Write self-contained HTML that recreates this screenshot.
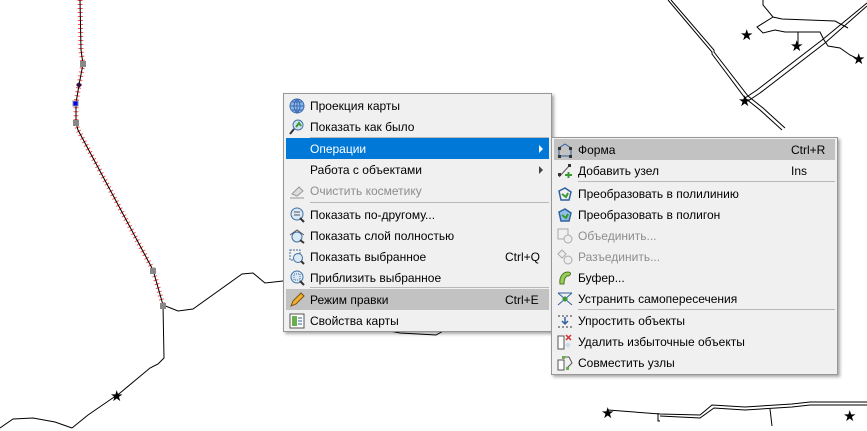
<!DOCTYPE html>
<html><head><meta charset="utf-8"><style>
body{margin:0;width:867px;height:431px;overflow:hidden;background:#fff;position:relative;font-family:"Liberation Sans",sans-serif;font-size:12px;color:#000}
.m{position:absolute;background:#f0f0f0;border:1px solid #979797;box-shadow:2px 2px 3px rgba(0,0,0,.35)}
.i{position:absolute;left:2px;right:2px;height:21px;line-height:23px;white-space:nowrap}
.i .t{position:absolute;left:24px}
.i .k{position:absolute}
.i svg{position:absolute;left:3px;top:3px}
.hl{background:#0078d7;color:#fff}
.gr{background:#c2c2c2}
.dis{color:#8d8d8d}
.s{position:absolute;left:26px;right:2px;height:1px;background:#b8b8b8}
.ar{position:absolute;right:6px;top:7px;width:0;height:0;border-left:4px solid #444;border-top:4px solid transparent;border-bottom:4px solid transparent}
</style></head><body>
<svg width="867" height="431" style="position:absolute;left:0;top:0">
<g fill="none" stroke="#000" stroke-width="1">
<path d="M80 0 L81 50 L83 64 L79 85 L76 103 L76 123 L78 130 L153 270 L163 305" stroke="#ff5050" stroke-width="5" stroke-dasharray="1 3"/>
<path d="M80 0 L81 50 L83 64 L79 85 L76 103 L76 123 L78 130 L153 270 L163 305"/>
<path d="M163 305 L164 358 L158 364 L150 368 L120 393 L88 415 L72 428"/>
<path d="M0 428 L13 419 L33 418 L55 422 L72 428"/>
<path d="M163 305 L178 311 L193 309 L242 274 L253 273 L265 283 L283 281"/>
<path d="M385 330 L400 333 L436 335 L445 330"/>
<path d="M668 0 L712 52 L712 54 L745 98 L760 110 L782 130"/>
<path d="M671 0 L714 50 L714 52 L748 96 L763 108 L785 128"/>
<path d="M745 98 L757 90 L822 40 L867 3"/>
<path d="M748 101 L760 93 L825 43 L867 6"/>
<path d="M763 0 L763 5 L773 17 L782 19 L835 21 L848 28"/>
<path d="M773 17 L757 27 L763 33 L775 30 L785 32 L798 32 L798 44 M798 32 L820 32 L824 40 L828 46 L840 48 L850 55 L858 59"/>
<path d="M608 410 L660 414 L700 415 L712 405 L745 407 L792 404 L810 402 L867 402"/>
<path d="M660 416 L700 418 L714 408 L745 410 L792 407 L810 405 L867 405"/>
<path d="M658 413 L658 421 L660 421 M770 409 L772 426"/>
</g>
<g fill="#888"><rect x="80" y="61" width="6" height="6"/><rect x="73" y="120" width="6" height="6"/><rect x="150" y="268" width="6" height="6"/><rect x="160" y="303" width="6" height="6"/></g>
<rect x="73" y="101" width="5" height="5" fill="#0000ff" stroke="#888"/>
<path d="M79 82 L82 85 L79 88 L76 85Z" fill="#301040"/>
<g font-size="15" font-family="DejaVu Sans" fill="#000">
<text x="110" y="401">★</text><text x="740" y="40">★</text><text x="790" y="51">★</text><text x="738" y="106">★</text><text x="852" y="64">★</text><text x="601" y="418">★</text><text x="843" y="421">★</text>
</g>
</svg>

<div class="m" style="left:283px;top:93px;width:267px;height:237px">
<div class="i" style="top:1px"><svg width="16" height="16"><circle cx="8" cy="8" r="7" fill="#8fb6e6" stroke="#3a6ab0"/><path d="M1 8H15M8 1V15M3 4H13M3 12H13M8 1C4 5 4 11 8 15C12 11 12 5 8 1" stroke="#3a6ab0" fill="none"/></svg><span class="t">Проекция карты</span></div>
<div class="i" style="top:22px"><svg width="16" height="16"><circle cx="9" cy="6" r="5" fill="#cfe3f5" stroke="#4070a0"/><path d="M5 10L1 15" stroke="#333" stroke-width="2"/><path d="M7 8L10 4L12 7" stroke="#3a9a30" stroke-width="2" fill="none"/></svg><span class="t">Показать как было</span></div>
<div class="s" style="top:43px"></div>
<div class="i hl" style="top:44px"><span class="t">Операции</span><span class="ar" style="border-left-color:#fff"></span></div>
<div class="i" style="top:65px"><span class="t">Работа с объектами</span><span class="ar"></span></div>
<div class="i dis" style="top:86px"><svg width="16" height="16"><path d="M3 11L10 4L14 8L8 13Z" fill="#ddd" stroke="#999"/><path d="M1 15H15" stroke="#999"/></svg><span class="t">Очистить косметику</span></div>
<div class="s" style="top:108px"></div>
<div class="i" style="top:110px"><svg width="16" height="16"><circle cx="8" cy="7" r="6" fill="#dbe9f7" stroke="#4070a0"/><path d="M5 5H11M5 8H11" stroke="#555"/><path d="M11 11L15 15" stroke="#333" stroke-width="2"/></svg><span class="t">Показать по-другому...</span></div>
<div class="i" style="top:131px"><svg width="16" height="16"><path d="M1 7L8 2L15 7" stroke="#555" fill="none"/><circle cx="8" cy="9" r="5" fill="#dbe9f7" stroke="#4070a0"/><path d="M11 12L15 15" stroke="#333" stroke-width="2"/></svg><span class="t">Показать слой полностью</span></div>
<div class="i" style="top:152px"><svg width="16" height="16"><rect x="1" y="1" width="10" height="10" fill="none" stroke="#4070a0" stroke-dasharray="2 1"/><circle cx="9" cy="9" r="4.5" fill="#dbe9f7" stroke="#4070a0"/><path d="M12 12L15 15" stroke="#333" stroke-width="2"/></svg><span class="t">Показать выбранное</span><span class="k" style="left:219px">Ctrl+Q</span></div>
<div class="i" style="top:173px"><svg width="16" height="16"><circle cx="8" cy="7" r="6" fill="#dbe9f7" stroke="#4070a0"/><rect x="5" y="4" width="6" height="6" fill="none" stroke="#4070a0" stroke-dasharray="1 1"/><path d="M11 11L15 15" stroke="#333" stroke-width="2"/></svg><span class="t">Приблизить выбранное</span></div>
<div class="s" style="top:193px"></div>
<div class="i gr" style="top:195px"><svg width="16" height="16"><path d="M2 14L4 9L12 1L15 4L7 12Z" fill="#f0b030" stroke="#805010"/></svg><span class="t">Режим правки</span><span class="k" style="left:219px">Ctrl+E</span></div>
<div class="i" style="top:216px"><svg width="16" height="16"><rect x="1" y="1" width="14" height="14" fill="#fff" stroke="#555"/><rect x="3" y="3" width="5" height="10" fill="#6ab04a"/><path d="M9 5H13M9 8H13M9 11H13" stroke="#3060a0"/></svg><span class="t">Свойства карты</span></div>
</div>

<div class="m" style="left:551px;top:137px;width:285px;height:236px">
<div class="i gr" style="top:1px"><svg width="16" height="16"><path d="M2 14L2 6L8 2L14 6L14 14Z" fill="none" stroke="#3060a0"/><g fill="#333"><rect x="1" y="13" width="3" height="3"/><rect x="12" y="13" width="3" height="3"/><rect x="1" y="5" width="3" height="3"/><rect x="12" y="5" width="3" height="3"/></g></svg><span class="t">Форма</span><span class="k" style="left:237px">Ctrl+R</span></div>
<div class="i" style="top:22px"><svg width="16" height="16"><path d="M2 14L13 2" stroke="#555"/><rect x="1" y="10" width="3" height="3" fill="#333"/><rect x="11" y="1" width="3" height="3" fill="#333"/><path d="M8 12H15M11.5 9V15" stroke="#3a9a30" stroke-width="2"/></svg><span class="t">Добавить узел</span><span class="k" style="left:237px">Ins</span></div>
<div class="s" style="top:43px"></div>
<div class="i" style="top:45px"><svg width="16" height="16"><path d="M2 5L8 2L14 6L12 14H4Z" fill="none" stroke="#3060a0" stroke-width="1.5"/><path d="M5 8L9 11L11 7" stroke="#3a9a30" stroke-width="2" fill="none"/></svg><span class="t">Преобразовать в полилинию</span></div>
<div class="i" style="top:66px"><svg width="16" height="16"><path d="M2 5L8 2L14 6L12 14H4Z" fill="#8fc0e8" stroke="#3060a0" stroke-width="1.5"/><path d="M5 8L9 11L11 7" stroke="#3a9a30" stroke-width="2" fill="none"/></svg><span class="t">Преобразовать в полигон</span></div>
<div class="i dis" style="top:87px"><svg width="16" height="16"><rect x="1" y="1" width="10" height="10" fill="none" stroke="#aaa"/><circle cx="11" cy="11" r="4" fill="#eee" stroke="#aaa"/></svg><span class="t">Объединить...</span></div>
<div class="i dis" style="top:108px"><svg width="16" height="16"><path d="M5 1L9 5L5 9L1 5Z" fill="#eee" stroke="#aaa"/><circle cx="11" cy="11" r="4" fill="#eee" stroke="#aaa"/></svg><span class="t">Разъединить...</span></div>
<div class="i" style="top:129px"><svg width="16" height="16"><path d="M3 14C2 8 5 2 11 2C15 2 14 6 10 6C8 7 7 10 7 14Z" fill="#9acd5a" stroke="#4a7a20"/></svg><span class="t">Буфер...</span></div>
<div class="i" style="top:150px"><svg width="16" height="16"><path d="M1 2L15 14M15 2L1 14M1 2L15 2" stroke="#3060a0" fill="none"/><path d="M5 8L8 5L11 8L8 11Z" fill="#3a9a30"/></svg><span class="t">Устранить самопересечения</span></div>
<div class="s" style="top:171px"></div>
<div class="i" style="top:172px"><svg width="16" height="16"><path d="M1 3H15M1 14H15" stroke="#333" stroke-dasharray="2 2"/><path d="M8 4V11M5 8L8 11L11 8" stroke="#3060a0" stroke-width="1.5" fill="none"/></svg><span class="t">Упростить объекты</span></div>
<div class="i" style="top:193px"><svg width="16" height="16"><rect x="1" y="2" width="6" height="13" fill="#fff" stroke="#555"/><path d="M9 1L14 6M14 1L9 6" stroke="#d03030" stroke-width="1.5"/><path d="M11 8L14 11L11 14L8 11Z" fill="#cde"/></svg><span class="t">Удалить избыточные объекты</span></div>
<div class="i" style="top:214px"><svg width="16" height="16"><rect x="1" y="5" width="6" height="10" fill="#fff" stroke="#555"/><path d="M6 2L12 2L15 8L10 13" fill="none" stroke="#555"/><rect x="5" y="1" width="3" height="3" fill="#6ab04a"/><rect x="9" y="12" width="3" height="3" fill="#6ab04a"/></svg><span class="t">Совместить узлы</span></div>
</div>
</body></html>
